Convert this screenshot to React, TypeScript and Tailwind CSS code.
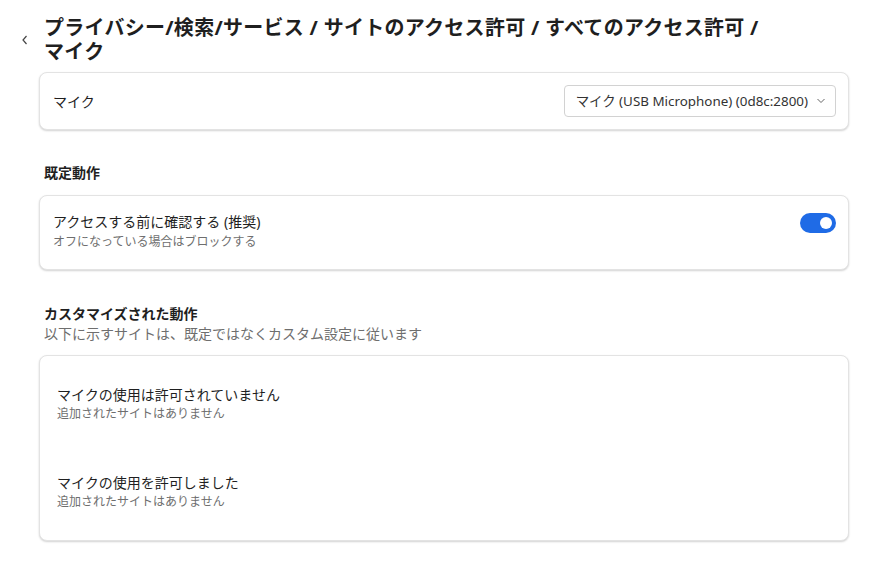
import React from 'react';

const Card: React.FC<{ className?: string; children: React.ReactNode }> = ({ className = '', children }) => (
    <div className={`rounded-lg border border-[#e3e3e3] bg-white shadow-[0_1px_2px_rgba(0,0,0,0.18)] ${className}`}>{children}</div>
);

export default function App() {
    return (
        <div className="min-h-[562px] w-[887px] bg-white text-[#1f1f1f]" style={{ fontFamily: '"Noto Sans", "Noto Sans CJK JP", sans-serif' }}>
            <div className="flex pl-[20px] pt-[16px]">
                <div className="w-[24px] pt-[17px] text-[#444]">
                    <svg width="10" height="14" viewBox="0 0 10 14" fill="none" stroke="currentColor" strokeWidth="1.2">
                        <path d="M6.5 3 L3 7 L6.5 11" />
                    </svg>
                </div>
                <h1 className="text-[20px] font-bold leading-[24px] tracking-[0.28px]">
                    プライバシー/検索/サービス / サイトのアクセス許可 / すべてのアクセス許可 /<br />
                    マイク
                </h1>
            </div>

            <div className="ml-[39px] mt-[8px] w-[810px]">
                <Card className="flex h-[58px] items-center justify-between pl-[13px] pr-[12px]">
                    <span className="text-[14px]">マイク</span>
                    <button className="flex h-[32px] items-center gap-[8px] rounded-[4px] border border-[#d2d2d2] bg-white pl-[11px] pr-[9px] text-[13.4px] text-[#333]">
                        マイク (USB Microphone) (0d8c:2800)
                        <svg width="10" height="6" viewBox="0 0 10 6" fill="none" stroke="#666" strokeWidth="1">
                            <path d="M1.5 1 L5 4.5 L8.5 1" />
                        </svg>
                    </button>
                </Card>

                <div className="mt-[33px] pl-[5px] text-[14px] font-bold leading-[20px]">既定動作</div>

                <Card className="mt-[12px] flex h-[75px] items-start justify-between pl-[13px] pr-[12px]">
                    <div className="flex flex-col pt-[16px]">
                        <span className="text-[14px] leading-[20px]">アクセスする前に確認する (推奨)</span>
                        <span className="mt-[1px] text-[12px] leading-[18px] text-[#6e6e6e]">オフになっている場合はブロックする</span>
                    </div>
                    <div className="mt-[17px] flex h-[20px] w-[36px] items-center justify-end rounded-full bg-[#1f6be6] pr-[4px]">
                        <div className="h-[12px] w-[12px] rounded-full bg-white" />
                    </div>
                </Card>

                <div className="mt-[34px] pl-[5px] text-[14px] font-bold leading-[20px]">カスタマイズされた動作</div>
                <div className="pl-[5px] text-[14px] leading-[20px] text-[#6e6e6e]">以下に示すサイトは、既定ではなくカスタム設定に従います</div>

                <Card className="mt-[11px] flex h-[186px] flex-col gap-[50px] pl-[17px] pt-[29px]">
                    <div className="flex flex-col">
                        <span className="text-[14px] leading-[20px]">マイクの使用は許可されていません</span>
                        <span className="text-[12px] leading-[18px] text-[#6e6e6e]">追加されたサイトはありません</span>
                    </div>
                    <div className="flex flex-col">
                        <span className="text-[14px] leading-[20px]">マイクの使用を許可しました</span>
                        <span className="text-[12px] leading-[18px] text-[#6e6e6e]">追加されたサイトはありません</span>
                    </div>
                </Card>
            </div>
        </div>
    );
}
